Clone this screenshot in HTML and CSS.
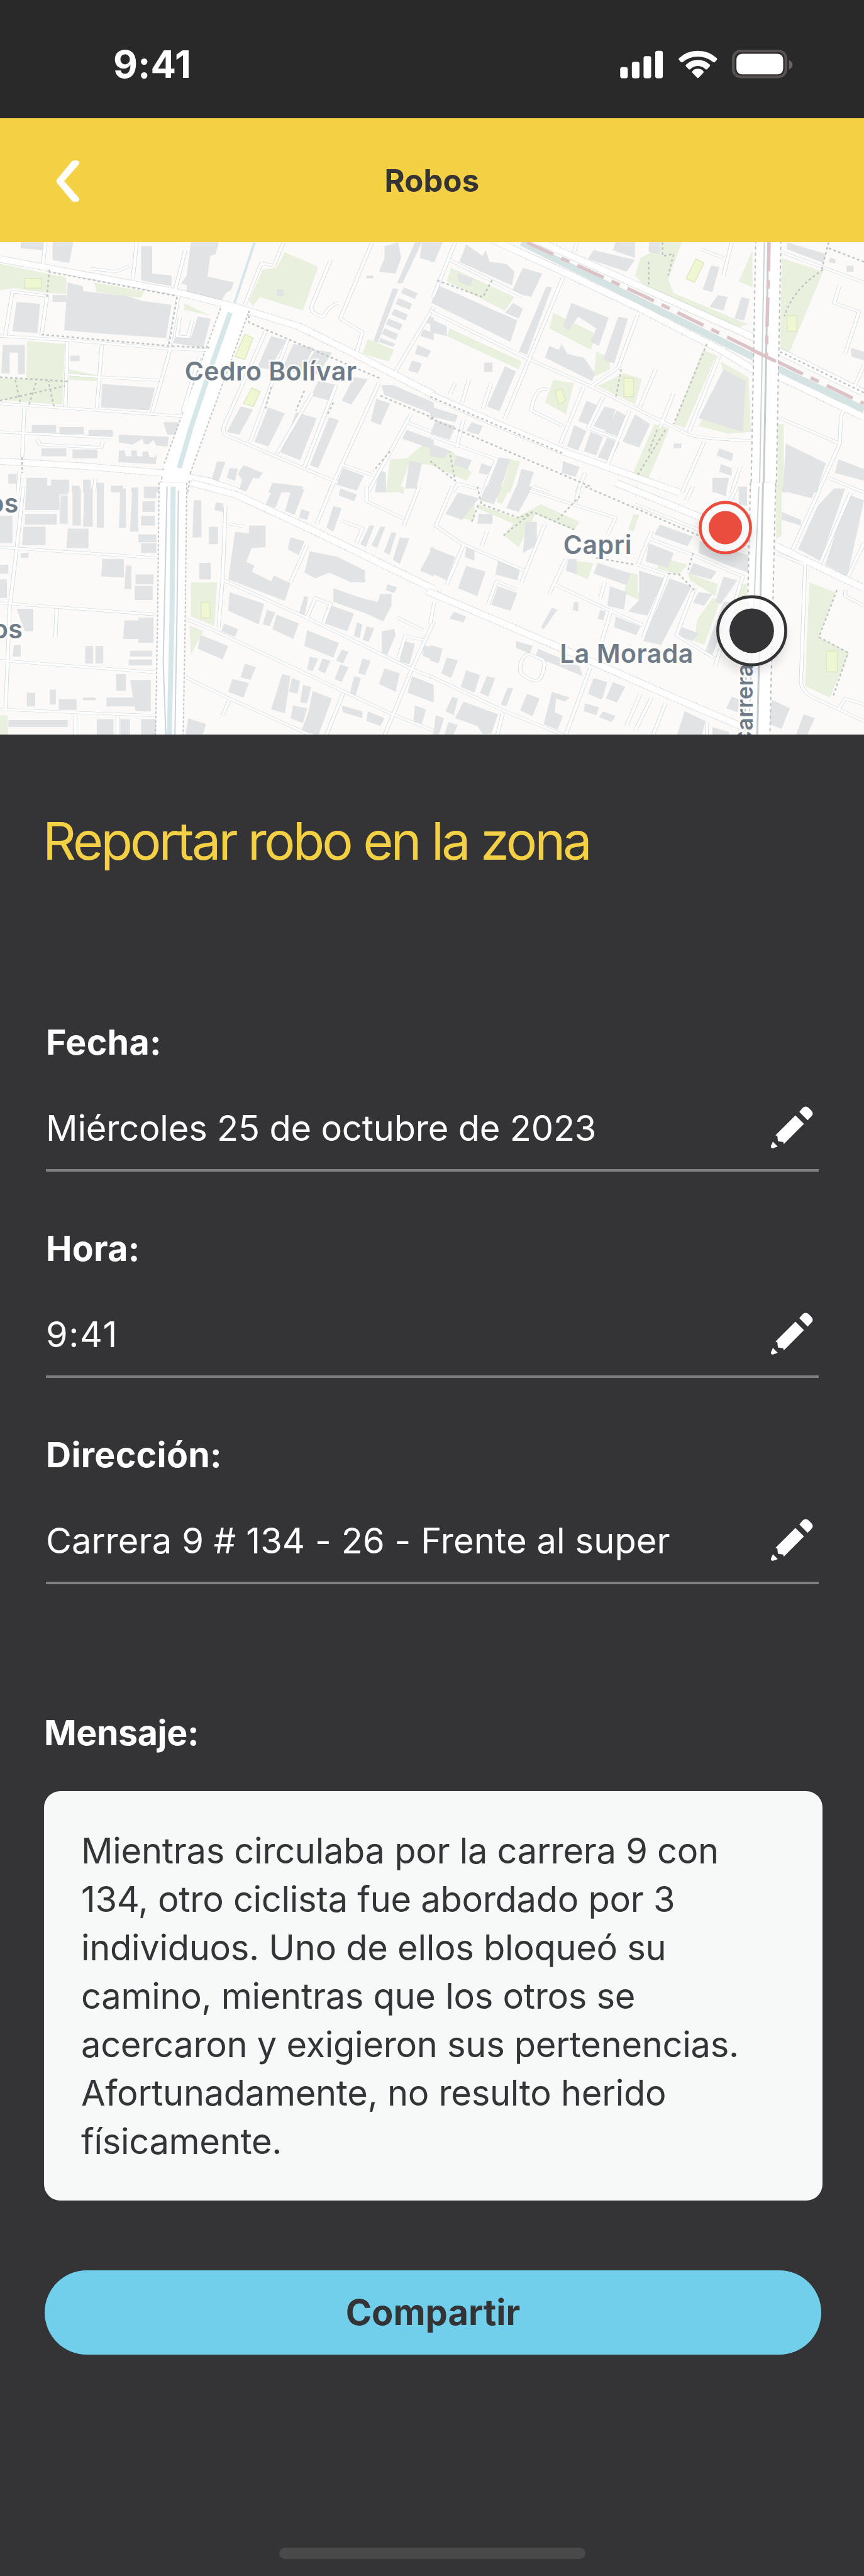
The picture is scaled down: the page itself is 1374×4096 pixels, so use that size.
FILE: index.html
```
<!DOCTYPE html>
<html lang="es">
<head>
    <meta charset="utf-8">
    <title>Robos</title>
    <link rel="stylesheet" href="styles.css">
</head>
<body>
    <div class="status-bar">
        <span class="time">9:41</span>
        <svg class="status-icons" viewBox="75 75 895 155">
            <g fill="#fff">
                <rect x="81" y="168" width="39" height="57" rx="11"/>
                <rect x="141" y="140" width="39" height="85" rx="11"/>
                <rect x="201" y="111" width="39" height="114" rx="11"/>
                <rect x="261" y="84" width="39" height="141" rx="11"/>
                <path d="M383 122Q424 84 480 84T577 122Q581 127 577 131L567 142Q562 145 558 142Q524 114 480 114T402 142Q397 145 393 142L383 131Q379 127 383 122Z"/>
                <path d="M419 155Q445 131 480 131T541 155Q545 160 541 164L527 178Q523 182 519 178Q502 162 480 162T441 178Q437 182 433 178L419 164Q415 160 419 155Z"/>
                <path d="M453 187Q464 176 480 176T507 187Q512 192 508 197L484 222Q480 226 476 222L452 197Q448 192 453 187Z"/>
                <rect x="678" y="99" width="240" height="106" rx="29"/>
            </g>
            <rect x="662" y="85" width="270" height="133" rx="38" fill="none" stroke="#555251" stroke-width="14"/>
            <path d="M948 132Q966 139 966 156T948 180Z" fill="#666362"/>
        </svg>
    </div>

    <header class="header">
        <button class="back">
            <svg viewBox="96 272 40 71"><path d="M125 272H132Q137 274 134 279L109 307.500L134 336Q137 341 132 343H125Q123 343 121 340L97 311Q94 307.500 97 304L121 275Q123 272 125 272Z" fill="#fff"/></svg>
        </button>
        <h1>Robos</h1>
    </header>

    <div class="map">
        <svg viewBox="0 413 1474 840" preserveAspectRatio="none">
            <defs>
                <path id="streets-a" d="M165 0L155 125M495 0L480 200M670 50L632 260M18 490L45 262 170 285 150 485M0 490L240 510 610 555 760 562M243 520L237 850M368 540L350 860M615 560L550 880M235 685L360 700 575 715M0 835L250 860 660 900M88 860L80 1110M0 980L400 1010M135 1018L145 1045 365 1060 372 1030M645 285L612 545M962 460L810 950Q800 990 830 1005L1220 1240M1040 510L905 1030M1130 780L1000 1095M1215 740L1100 1160M1370 730L1190 1290M1485 890L1330 1290M1470 930L1568 985M1240 1150L1345 1200M1025 10L990 130 945 115 885 330M1195 100L1125 340Q1130 385 1170 390Q1190 330 1225 320M1345 10L1230 400 1310 470 1290 570M1568 340L1430 670M720 600L660 880M70 1180L65 1290M345 1220L340 1290M330 145L420 160 470 130M650 395L640 490 680 495 695 410"/>
                <path id="avenues-a" d="M0 95L170 140 640 265 850 340 1080 440 1280 580 1568 790M0 1130L300 1155 620 1195 750 1230 870 1290"/>
                <path id="streets-b" d="M90 10L10 290M70 100L340 290M0 360L350 605 570 740 930 990Q960 1015 1160 1025M480 190L360 600 270 910M750 380L680 650 585 745M555 750L470 1040M625 800L570 960M720 870L640 1150M815 660L755 860M1045 590L935 980M990 1030L910 1290M425 765Q380 740 365 870L480 950M1270 60L1568 215M1480 230L1460 320 1550 365 1500 580M1568 640L1530 760M1265 910L1480 1040 1430 1200 1400 1290M1510 820L1485 900 1480 1040M0 1000L240 1120 190 1290M120 920L95 1060M560 1190L530 1290M1090 10L1060 180M980 45L1060 90M1440 1215L1568 1290M570 960L680 1020M80 1290L100 1245 180 1275M530 10L520 60M140 710L115 830M90 730L70 790M220 730L190 860M370 1260L430 1290M1120 1160L1090 1290M830 960L880 780"/>
                <path id="avenues-b" d="M230 0L480 160 760 350 1050 560 1190 680M400 10L780 250 1190 510M0 790L210 920 480 1080 800 1240 900 1290M1250 560L1568 780M1250 690L1568 905"/>
                <path id="streets-c" d="M85 0L60 320 35 620 20 1150M0 310L565 365M0 595L560 655M0 890L555 950M0 1140L560 1172M205 625L200 770M272 1170V1290M425 1175V1290M815 100L805 470 790 720M830 190L880 205M810 480L1100 665 1490 935 1568 980M675 680L780 740 1230 1040 1410 1160 1568 1250M670 975L830 1085 1120 1270M1110 300L1050 490M1200 0L1145 190M1325 0V75L1460 165M1515 0L1460 200M1110 670L1140 570 1195 600 1170 695M1568 690L1490 930 1385 1290M1240 1060L1175 1290M830 1090L805 1170M1440 880L1465 765 1530 785M1435 670L1530 735M1235 175L1310 215 1288 290"/>
                <path id="avenues-c" d="M690 -20L850 40 1110 210 1330 360 1568 525"/>
                <path id="streets-d" d="M80 0L20 200 110 290 340 430M120 300L60 500M360 20L670 160 640 250M540 0L525 80M415 190L330 490M490 370L430 550M450 500L650 635 770 710M655 630L620 790M630 490L615 570M800 230L750 400M790 265L950 350 1130 460 1030 920M750 400L855 450 770 770M955 520L890 760 1030 880M210 600L240 485 310 525M15 590L0 700M0 970L270 1150 480 1270M578 930L490 1270M262 1160L240 1290M325 930Q330 850 365 860L405 885Q420 900 405 960Q395 1010 360 985Q320 960 325 930M1110 0L1065 120M950 0L925 70M1410 10L1310 320M1520 30L1410 390M1568 290L1510 460M1250 340L1355 400 1340 1000Q1345 1060 1400 1090L1568 1200M1500 530V560L1568 610M760 1060L710 1220M800 1080L740 1250M850 1110L800 1290M1000 1210V1290M1475 1140L1500 1085 1568 1115M205 230L185 310M740 90L960 215 1140 330"/>
                <path id="avenues-d" d="M-10 535L230 680 560 880 880 1080 1180 1260M670 -20L1000 170 1170 300M1250 305L1568 520"/>
            </defs>

            <rect y="413" width="1474" height="840" fill="#fbfaf9"/>

            <g class="tile" transform="translate(0 410) scale(.47194 .33333)">
                <path class="park" d="M0 120L240 190V275L175 270 50 245 0 255ZM98 515L235 530 225 840 110 830 0 815V705L95 710ZM250 660L350 690V720L250 715ZM1030 60L1150 135 1095 360 940 290 915 335 900 310 950 150 1000 140ZM340 215L520 260 510 295 350 265ZM665 320L760 385 665 355ZM1330 505L1425 560 1405 620 1310 580ZM1410 1120L1470 1115 1530 1045 1568 1050V1150L1480 1140 1440 1290H1395Z"/>
                <path class="pitch" d="M885 480L915 500 885 610 850 595ZM910 755L940 775 915 850 880 835ZM90 195H150V245H90Z"/>
                <path class="building" d="M75 10h80v40l-80-10zM190 10h75l-15 105-60-15zM510 30h40v140l70 10v55l-110-30zM690 10h100l-10 60-20 10-10 105 95 30-10 40-15 10-20 40-125-30V230l-20-10 20-40zM245 215L300 235V260L460 285 515 310 620 330 600 500 400 480 232 460ZM60 315L145 325 135 475 45 465ZM190 280h50v35h-50zM715 390L762 400 735 550 625 525 635 490 690 500ZM10 535h80v150H65V575H35v105H5zM255 590h33v28h-33zM370 735L560 755 540 870 365 855ZM115 945h88v40h-88zM215 955h88v36h-88zM320 970h88v35h-88zM590 930h55l-10 65h-30zM430 995L610 1005 605 1055 565 1050 555 1020 535 1045 520 1040 515 1015 480 1045 430 1035ZM430 1075h20l5 30h20v-30h20v30h20v-25h20l5 30h20l8-20-5 55-135-10zM150 1065h90v40h-90zM262 1070h90v45h-90zM95 1215h75v40h15v-30h65v65H95zM30 1195h30v50H30zM260 1255h28v35h-28zM300 1225h28v65h-28zM350 1240h25v50h-25zM400 1255h45v35h-45zM475 1265h25v25h-25zM530 1262h45v28h-45z"/>
                <path class="building" d="M980 490l55 20-60 150-45-10zM1060 530l75 20-50 130-65-20zM1140 560l60 15-50 110-60-10zM1150 720l70 20-30 80-65-25zM1280 700l50 10-60 130-35-20zM870 850l45 15-50 130-45-15zM970 855l60 30-60 170-50-25zM1070 880l75 30-60 215-70-40zM1190 905l35 15-75 245-30-15zM785 1130l30 5-25 100-25-15zM880 1150l70 40-15 30-20-5-25 70-25-10 10-50-15-30zM830 1165l30 5-10 60-30-15zM985 1240l110 20-5 30h-120zM1360 810l50 25-35 110-35-20zM1380 740h40l148 90v60l-180-100zM1420 245l20 5-75 275-15-10zM1500 10h25l-70 210h-20zM1390 30l50-20 10 80-20 80-60-10 20-70zM1525 10h43v100l-50-20zM1545 385l23 10v40l-33-15zM1530 455l38 20v35l-48-20zM1510 535l48 30-13 35-45-20zM1490 615l35 15-15 50-35-15zM1470 970l98 50v50l-115-55zM1240 1165l75 40-25 75-75-30zM1480 1130l45 10-20 130h-40zM1370 1170l25 20v100h-40zM1460 240l50 30-10 30-50-30zM1440 295l50 30-10 30-50-30zM1425 350l50 30-10 30-50-30zM1405 400l50 30-10 30-50-30zM1390 450l50 30-10 30-50-30zM1375 500l55 30-10 15-50-25zM1325 180h25v15h-25zM1000 250h25v35h-25z"/>
                <use class="street-line" href="#streets-a"/>
                <use class="avenue-line" href="#avenues-a"/>
                <path class="canal-road-line" d="M850 350L640 1170 628 1290"/>
                <use class="street" href="#streets-a"/>
                <use class="avenue" href="#avenues-a"/>
                <path class="canal-road" d="M850 350L640 1170 628 1290"/>
                <path class="canal thin" d="M920 10L848 320"/>
                <path class="canal" d="M832 370L770 620 690 960 648 1165M630 1250L628 1290"/>
                <path class="footpath" d="M178 150L170 290M640 290L610 540M0 820L235 745M0 700L245 722M55 715L75 840M105 840L130 730M195 850L175 720M80 1110V1190M980 750L960 860M1100 770L1070 870M1205 830L1180 900M1410 1080L1350 1180M150 482L610 540 760 550M175 160L640 285M900 360V420L1380 710M1375 795L1568 910"/>
            </g>

            <g class="tile" transform="translate(734 410) scale(.47194 .33333)">
                <path class="park" d="M75 140L305 290 270 360 60 210ZM445 370L600 480 580 560 430 450ZM70 450L330 620 320 660 60 490ZM600 570L650 600 650 660 590 700ZM605 745L700 680 765 710 740 840ZM445 715L520 730 490 890 415 830ZM985 560L1035 590 920 960 880 940ZM1050 620L1150 700 1160 980 1080 990 970 950 1060 680ZM810 940L865 960 780 1250 730 1200ZM830 10H910L860 200 880 270 1150 430 1100 450 780 240 740 180 760 90 800 60ZM1165 50V240L1115 210ZM1270 90L1420 160 1300 570 1265 560ZM1255 940H1278V1290H1255ZM0 1110L80 1080 150 1190 130 1230 0 1150ZM290 1120L325 1130 290 1290H255Z"/>
                <path class="pitch" d="M960 95L990 115 955 215 925 195ZM700 705H735V800H700ZM1290 385H1325V465H1290ZM450 770L475 760 490 820 465 840Z"/>
                <path class="building" d="M0 10h45L15 110H0zM130 20l60 60 10-30 15 60 60 10 30 40-10 70-190-120zM335 140l70 30-40 120-70-30zM20 225L315 410 290 520 5 320ZM300 320l35 30-15 50-50-30zM420 235l20 5-90 345-30-15zM510 320L645 395 610 540 580 520 600 450 535 390 500 460 480 440ZM680 390L715 400 665 630 625 610ZM430 540l35 20 10-30 20 50 60 20 40 80-10 40-170-120zM270 645L310 670 250 875 205 850ZM195 625h30v48h-30zM565 820l40 25-30 100-40-20zM630 850l40 15-30 110-50-25zM675 870l35 30-30 105-50-25zM740 890l55 50-40 120-60-30zM520 945l45 30-30 100-40-20zM580 980l45 25-25 95-45-20zM640 1010l45 25-35 95-45-20zM1060 660L1140 720 1130 980 970 910ZM590 50l150 50-30 60-140-65zM670 10h70v80l-80-40zM1015 130l30 5-25 130-35-15zM1040 280l35 10-15 70-50-20zM1125 290l30 10-20 110-35-10zM1290 10l140 60-10 45-130-70zM1445 88l20 10v20l-25-5zM1505 130h25v30h-25zM1285 1040L1430 1140 1395 1290H1275ZM1475 1120l93 50v60l-105-40zM880 1040h28v25h-28zM1045 1065l50 25-5 40-55-30zM1050 1145l40 20v40l-45-20zM1020 1215h60l-10 75h-50zM1520 550l48 20v45l-45-20zM0 850L100 895 90 930 0 900ZM20 920l70 30-20 70-70-30zM150 930l40 20-15 45-45-20zM480 1130l60 30-15 50-50-20zM250 1110l40 10-40 170h-50zM330 1170l45 15-25 105h-45zM0 1040l70 35-20 40-50-10zM95 1100l55 25-15 45-50-20zM185 1140l40 20-20 40-30-10zM0 400l60 40v50l-60-20zM790 10h40v60l-40-10zM100 170l55 25-10 40-45-25z"/>
                <use class="street-line" href="#streets-b"/>
                <use class="avenue-line" href="#avenues-b"/>
                <use class="street" href="#streets-b"/>
                <use class="avenue" href="#avenues-b"/>
                <path class="river" d="M330 10L1170 598M1255 655L1568 865"/>
                <path class="busway" d="M350 10L780 290 1210 590 1568 835"/>
                <path class="footpath" d="M25 205L190 290 225 200M1000 530L880 940M1420 150Q1310 250 1280 390M840 10V80L880 70 860 180M790 110V240M850 970L750 1200M820 970L790 1080M690 660L670 810M1265 570L1568 780M1440 10L1415 150M1568 110L1440 40M0 1130L90 1230 70 1080M0 910L580 1260M0 800L480 1090"/>
                <path class="main-road-line" d="M1222 0L1205 1290"/>
                <path class="main-road" d="M1222 0L1205 1290"/>
                <path class="rail" d="M1222 0L1205 1290"/>
                <path class="lane" d="M1208 0L1190 1290"/>
                <path class="busway" d="M1225 10L1215 590"/>
                <path class="busway" d="M1160 558L1250 620"/>
            </g>

            <g class="tile" transform="translate(0 830) scale(.47194 .33333)">
                <path class="park" d="M690 490h95l-10 225-85-50zM685 710l50 30-45 120zM0 1170h28v110H0zM1400 0h60v40z"/>
                <path class="pitch" d="M727 592H760V672H727Z"/>
                <path class="building" d="M95 0h150v40h-30v80H90zM90 140h115v55H90zM85 205h80v95H80zM245 215h75v100h-80zM220 45h25v145h-30zM262 10h30v190h-30zM305 10h30v195h-35zM350 10h25v200h-25zM435 10h20v200h-25zM478 10h22v220h-30zM520 0h45v60h-45zM515 75h45v55h-45zM510 150h50v50h-50zM500 245h65v40h-65zM510 290h55v50h-55zM370 370h78v95l-82-5zM455 405h20v120h-25zM490 450h65v50h-65zM487 508h65v72h-65zM0 400h30v45H0zM0 475h25v95H0zM60 625h60v115H90zM450 685h50v95h-55zM500 670h55v130h-55zM308 815h28v90h-28zM345 815h28v90h-28zM470 840h80v30h-80zM465 885h85v30h-85zM420 960h35v85h-35zM470 990h75v160h-55zM385 1080h150v45H385zM97 1055h30v70H97zM180 1040h22v75h-22zM212 1088h65v55h-65zM30 1195h215v35H30zM350 1190h60v90h-60zM435 1190h35v90h-35zM510 1190h55v90h-55zM300 1080h45v14h-45zM0 150h45v140H0zM75 340h28v25H75zM50 810h25v60H45z"/>
                <path class="building" d="M700 70h28v190h-32zM755 205h33v90h-33zM720 390h42v85h-42zM780 80l25 5v45l-30-10zM850 230l50 10v-40h60v110l-50 5-20 70 30 20-10 30 70 50 10-30 60 40-20 90-205-110zM1050 260l50 20-20 70-40-30zM1120 330l100 30 100 70v60h-50l-80-50-50 30-40-30zM1205 520l100 50 60 20 10-40h40v60l-30 80-60-40-120-60zM1200 610l80 40-25 90-80-40zM830 540l125 60-20 105-110-70zM965 630l30 15-20 70-25-10zM1000 655l80 45-20 80-75-50zM1110 735l115 65-20 75-105-60zM725 760l100 55-20 70-90-55zM810 700l50 30-10 40-50-30zM885 905l40 20-20 65-35-15zM840 985l60 20-20 75-55-30zM1020 960l30 10-20 190-50-20zM1055 980l30 15-10 65-30-10zM1095 1015l30 10-15 85-25-5zM1130 1045l70 40-50 190-60-30 25-90zM1060 1120l50 15-15 75-45-25zM1235 835l25 10-20 60-25-15zM1120 870l30 10-20 65-20-10zM1165 880l30 10-20 65-25-15zM1230 910l30 15-25 75-25-15zM1310 880l30 10-20 75-25-10zM1280 970l25 10-20 90-20-10zM1390 930l55 25-15 95-60-40zM1490 970l78 45v90l-95-50zM1330 1150l60 35-15 40-50-25zM1235 1120l75 30v35l-70-30zM1500 1120l40 20-15 75-30-15zM1530 810l38 15v65l-40-25zM1460 790l40 15-20 105-35-15zM1380 740l45-10 5 30-30 100-20-10zM1290 695l20 10-10 70-20-10zM1325 715l28 10-20 70-22-10zM1100 560l15 5-15 95-20-10zM1205 100l30 10-30 120-25-20zM1335 200h18l-30 110-20-15zM1375 205h18l-30 110-20-15zM1415 235h18l-25 115-20-15zM1445 260l35 5-35 130-25-20zM1568 300v160l-50-30zM990 0h35l-30 110-35-20zM1055 10l45 5-35 130-35-20zM1090 115l30 15-10 40-30-10zM1230 10l60 30-10 35-55-30zM680 1185l65 30-15 65h-60zM1400 500l35 15-10 30-30-15z"/>
                <use class="street-line" href="#streets-c"/>
                <path class="canal-road-line" d="M625 -20L620 640 612 1290"/>
                <use class="avenue-line" href="#avenues-c"/>
                <use class="street" href="#streets-c"/>
                <path class="canal-road" d="M625 -20L620 640 612 1290"/>
                <use class="avenue" href="#avenues-c"/>
                <path class="lane" d="M604 0L590 900 600 1290M645 20L640 640 632 1290"/>
                <path class="canal" d="M626 0L622 640 612 1290"/>
            </g>

            <g class="tile" transform="translate(734 830) scale(.47194 .33333)">
                <path class="park" d="M170 90L310 160 400 90 540 180 520 225 380 140 320 310 265 250 300 190 170 110ZM100 90h60v85l-70-20zM735 140l20 5-20 85-20-10zM520 380l70 10-20 85-50-30zM720 440l30 10v80l20 60-70-45zM830 360l100 40-30 50-80-30zM930 440l110 60-10 60-90-80zM1020 570l30 10-60 230-35-20 10-110zM1120 500h25v110l-50 40zM1370 490l95 50-60 230 110 80-70 230-90-60zM1250 0h20v250l-20 20zM250 0h40l-30 90-20-10z"/>
                <path class="pitch" d="M1432 840H1472V948H1432Z"/>
                <path class="building" d="M100 30l75 30-60 110-60-30zM200 0h60l-30 90-50-20zM310 0h60l-50 130-45-20zM0 310l90 50-30 120-60-40zM130 405l70 30-30 125-70-40zM245 510l70 35-25 90-70-30zM175 140h50v50h-55zM130 310h30v70l-35-20zM245 380l80 40-10 60-80-30zM345 180h40v120l-50 40zM605 390l120 55-15 60-120-60zM500 370h30v80l-40-20zM650 510l60 30-10 90-60-20zM755 430l90 40-60 190-70-20 40-60zM865 470l80 40-110 300-65-20zM670 665l90 50-15 45-80-40zM830 195l120 60-20 50-120-60zM790 290l90 50-20 75-80-30zM950 390l85 45-20 40-80-30zM975 280l175 70v90l-80-40-100-60zM1060 460l50 20-60 120-20-10zM1060 590h30l-20 90-50 180h-30zM970 540l50 10-30 60-40-15zM910 720l60 30-20 40-55-25zM440 620l20 10-50 100-10-10zM520 590h15v50l-20-10zM615 630l20 10-10 45-20-10zM85 640l45 25-10 30-50-20zM0 810l45 20-15 75-30-15zM60 875l40 15-25 90-35-25zM130 940l50 25-20 90-50-30zM205 970l30 10-25 95-30-20zM280 1030h20l-25 95-20-10zM350 1060l45 25-25 90-45-30zM80 1075l20 10-15 85-30-20zM120 1100l125 65-25 100h-30l-20-40-80-40zM440 1050l65 30-20 20-30-15-5 70 30 20-20 70-50-30zM590 980l50 20-20 90-50-30zM660 1000l45 25-30 80-40-20zM560 1110l50 20-10 40-45-20zM625 1150l45 25-15 30-45-25zM920 1150l75 50-15 80h-90zM1090 1075l40 20-20 60-40-20zM1235 1090l65 45-30 105-45-25zM1350 1165l40 20-30 95h-40zM1275 0h120l-15 60-110-40zM1400 100l60-90h40l-90 370-80-60zM1510 40l58 30-60 390-80-60zM1270 130l70 40v30l-70-30zM310 790l60 25-10 40-50-30zM390 830l150 90 10 50-170-100zM1040 0h30v50l-40-20zM1115 0h30v100l-30-10zM20 1170l30 15-20 90H10zM65 1205l35 15-20 60H50zM1020 1230l60 25v30h-60z"/>
                <use class="street-line" href="#streets-d"/>
                <use class="avenue-line" href="#avenues-d"/>
                <use class="street" href="#streets-d"/>
                <use class="avenue" href="#avenues-d"/>
                <path class="footpath" d="M170 0L185 90 320 160 370 130 520 220M150 180L175 90M265 250L370 130M560 0L970 250M460 170L540 50M600 365L740 400M860 445L900 450 955 530M950 340L930 440M1470 530L1405 770 1510 850 1455 1080"/>
                <path class="main-road-line" d="M1203 -20L1182 1290"/>
                <path class="main-road" d="M1203 -20L1182 1290"/>
                <path class="rail" d="M1203 -20L1182 1290"/>
                <path class="lane" d="M1188 0L1150 1290"/>
            </g>

            <g class="place">
                <text x="315" y="649">Cedro Bolívar</text>
                <text x="961" y="945">Capri</text>
                <text x="955" y="1131">La Morada</text>
                <text x="32" y="874" text-anchor="end">os</text>
                <text x="39" y="1089" text-anchor="end">os</text>
                <text class="road-name" transform="translate(1284 1132) rotate(-90)" text-anchor="end">Carrera</text>
            </g>

            <ellipse cx="1236" cy="912" rx="48" ry="46" class="pin-shadow"/>
            <circle cx="1237.500" cy="900" r="43" fill="#fff" fill-opacity=".8" stroke="#ea4d3d" stroke-width="5"/>
            <circle cx="1237.500" cy="900" r="28.500" fill="#ea4d3d"/>
            <ellipse cx="1281" cy="1090" rx="61" ry="58" class="pin-shadow"/>
            <circle cx="1282.500" cy="1076" r="58" fill="#fff" fill-opacity=".8" stroke="#343436" stroke-width="5"/>
            <circle cx="1282.500" cy="1076" r="38" fill="#343436"/>
        </svg>
    </div>

    <svg class="sprite">
        <symbol id="pencil" viewBox="222 143 217 217">
            <path d="M385 152Q401 137 417 152L430 165Q445 181 430 196L411 215 368 172ZM348 190L392 234 288 338 286 328 258 323 255 296 245 293ZM232 325L257 350 233 359Q220 361 222 348Z" fill="#fff"/>
        </symbol>
    </svg>

    <main class="report">
        <h2>Reportar robo en la zona</h2>

        <div class="fields">
            <div class="field">
                <label>Fecha:</label>
                <div class="value date">
                    <span>Miércoles 25 de octubre de 2023</span>
                    <svg class="edit"><use href="#pencil"/></svg>
                </div>
            </div>
            <div class="field">
                <label>Hora:</label>
                <div class="value hour">
                    <span>9:41</span>
                    <svg class="edit"><use href="#pencil"/></svg>
                </div>
            </div>
            <div class="field">
                <label>Dirección:</label>
                <div class="value">
                    <span>Carrera 9 # 134 - 26 - Frente al super</span>
                    <svg class="edit"><use href="#pencil"/></svg>
                </div>
            </div>
        </div>

        <label class="message-label">Mensaje:</label>
        <p class="message">Mientras circulaba por la carrera 9 con 134, otro ciclista fue abordado por 3 individuos. Uno de ellos bloqueó su camino, mientras que los otros se acercaron y exigieron sus pertenencias. Afortunadamente, no resulto herido físicamente.</p>

        <button class="share">Compartir</button>
    </main>

    <div class="home-indicator"></div>
</body>
</html>
```
FILE: styles.css
```
* {
    box-sizing: border-box;
}
body {
    font-family: Inter, "Open Sans", sans-serif;
    margin: 0;
    height: 4096px;
    background: #343436;
    color: white;
    display: flex;
    flex-direction: column;
}
h1, h2, p {
    margin: 0;
}
button {
    font-family: inherit;
    border: none;
    background: none;
    padding: 0;
}

/* Status bar */
.status-bar {
    flex: none;
    height: 188px;
    padding: 16px 112px 0 180px;
    background: #292929;
    display: flex;
    justify-content: space-between;
    align-items: center;
}
.time {
    font-size: 60px;
    font-weight: 650;
    letter-spacing: 0.2px;
}
.status-icons {
    width: 278px;
    height: 48px;
}

/* Header */
.header {
    flex: none;
    height: 197px;
    padding: 2px 90px 0;
    background: #f4d044;
    color: #343436;
    display: grid;
    grid-template-columns: 60px 1fr 60px;
    align-items: center;
}
.header h1 {
    font-size: 49px;
    font-weight: 650;
    letter-spacing: 0.2px;
    text-align: center;
}
.back svg {
    display: block;
    width: 37px;
    height: 66px;
}

/* Map */
.map {
    flex: none;
    height: 783px;
}
.map svg {
    display: block;
    width: 100%;
    height: 100%;
}
.tile * {
    vector-effect: non-scaling-stroke;
    stroke-linejoin: round;
}
.park {
    fill: #e9f0de;
}
.pitch {
    fill: #eff6d2;
    stroke: #dde8c4;
    stroke-width: 1.5px;
}
.building {
    fill: #e1e3e4;
}
.street, .street-line, .avenue, .avenue-line, .canal, .canal-road,
.canal-road-line, .main-road, .main-road-line, .river, .busway, .rail,
.lane, .footpath {
    fill: none;
}
.street-line {
    stroke: #cfd5d7;
    stroke-width: 14px;
}
.street {
    stroke: white;
    stroke-width: 10.5px;
}
.avenue-line {
    stroke: #b9bec0;
    stroke-width: 35px;
    stroke-dasharray: 3px 3px;
}
.avenue {
    stroke: white;
    stroke-width: 30px;
}
.canal-road-line {
    stroke: #c2c8ca;
    stroke-width: 46px;
    stroke-dasharray: 4px 3px;
}
.canal-road {
    stroke: white;
    stroke-width: 42px;
}
.canal {
    stroke: #d6e7ea;
    stroke-width: 8px;
}
.canal.thin {
    stroke-width: 4px;
}
.main-road-line {
    stroke: #b9bec0;
    stroke-width: 42px;
    stroke-dasharray: 5px 5px;
}
.main-road {
    stroke: white;
    stroke-width: 38px;
}
.river {
    stroke: #d5e3e3;
    stroke-width: 11px;
}
.busway {
    stroke: #dcc3c7;
    stroke-width: 5.5px;
    stroke-dasharray: 46px 14px 14px 14px;
}
.rail {
    stroke: #c8cbcc;
    stroke-width: 3px;
}
.lane {
    stroke: #cdd3d6;
    stroke-width: 2px;
}
.footpath {
    stroke: #bfc5c1;
    stroke-width: 2.5px;
    stroke-dasharray: 4px 4px;
}
.place text {
    fill: #6f7c88;
    stroke: white;
    stroke-opacity: 0.8;
    stroke-width: 6px;
    paint-order: stroke;
    font-size: 44px;
    font-weight: 600;
    letter-spacing: 0.5px;
}
.place .road-name {
    font-size: 38px;
    letter-spacing: 0.6px;
}
.pin-shadow {
    fill: black;
    opacity: 0.1;
    filter: blur(8px);
}

/* Report form */
.sprite {
    position: absolute;
    width: 0;
    height: 0;
}
.report {
    flex: none;
    padding: 119px 66px 0 70px;
    display: flex;
    flex-direction: column;
}
.report h2 {
    margin-left: -2px;
    font-size: 82.5px;
    font-weight: 420;
    line-height: 100px;
    letter-spacing: -3.8px;
    color: #f4d044;
}
.fields {
    margin: 236px 6px 0 3px;
    display: flex;
    flex-direction: column;
    gap: 88px;
}
label {
    display: block;
    font-size: 55.5px;
    font-weight: 660;
    line-height: 68px;
    letter-spacing: 0.3px;
}
.value {
    height: 103px;
    margin-top: 69px;
    border-bottom: 4px solid #808082;
    display: flex;
    justify-content: space-between;
    font-size: 56px;
    font-weight: 420;
    line-height: 68px;
    letter-spacing: 0.1px;
}
.date {
    letter-spacing: -0.2px;
}
.hour {
    letter-spacing: 1.5px;
}
.edit {
    width: 67px;
    height: 67px;
    margin: -1px 9px 0 0;
}
.message-label {
    margin-top: 202px;
    letter-spacing: -0.4px;
}
.message {
    height: 651px;
    margin-top: 59px;
    padding: 57px 110px 0 59px;
    border-radius: 26px;
    background: #f6f9f8;
    color: #343436;
    font-size: 56px;
    font-weight: 420;
    line-height: 77.05px;
    letter-spacing: -0.3px;
}
.share {
    height: 134px;
    margin: 111px 2px 0 1px;
    border-radius: 67px;
    background: #71cfeb;
    color: #343436;
    font-size: 56px;
    font-weight: 650;
    letter-spacing: 0;
}

.home-indicator {
    width: 487px;
    height: 18px;
    margin: auto auto 27px;
    border-radius: 9px;
    background: #494949;
}
```
